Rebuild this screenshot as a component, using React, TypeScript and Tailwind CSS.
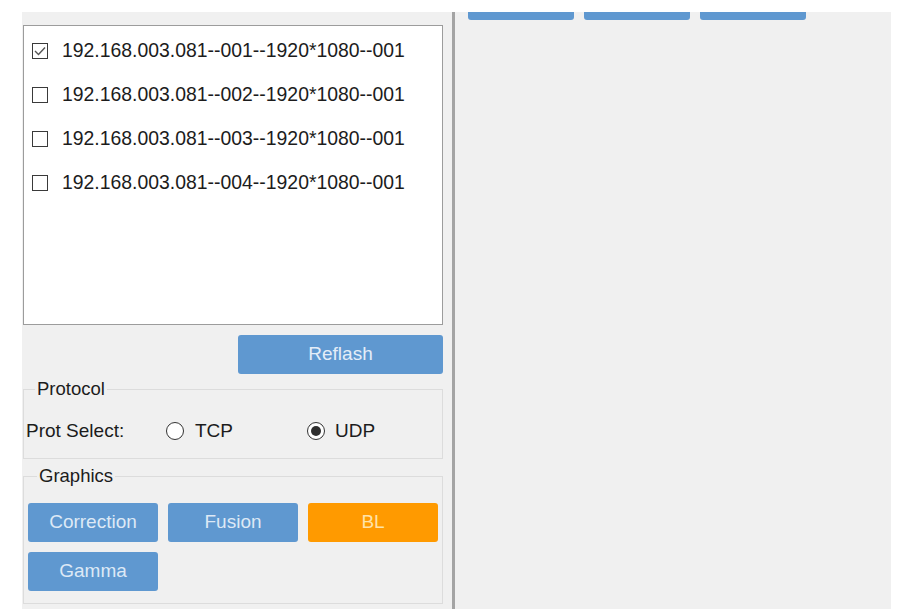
import React from "react";

const rows = [
  { id: "001", checked: true },
  { id: "002", checked: false },
  { id: "003", checked: false },
  { id: "004", checked: false },
];

function CheckBox({ checked }: { checked: boolean }) {
  return (
    <span className="w-[16px] h-[16px] border border-[#3a3a3a] bg-white flex items-center justify-center shrink-0">
      {checked && (
        <svg width="12" height="10" viewBox="0 0 12 10" fill="none">
          <path d="M1 5 L4.5 8.5 L11 1.5" stroke="#555" strokeWidth="1.4" />
        </svg>
      )}
    </span>
  );
}

function Radio({ checked }: { checked: boolean }) {
  return (
    <span className="w-[18px] h-[18px] rounded-full border border-[#333] bg-white flex items-center justify-center shrink-0">
      {checked && <span className="w-[10px] h-[10px] rounded-full bg-[#2e2e2e]" />}
    </span>
  );
}

function Btn({ label, active }: { label: string; active?: boolean }) {
  return (
    <button
      className={
        active
          ? "w-[130px] h-[39px] rounded-[3px] bg-[#ff9a00] text-[#ffe3a8] text-[19px]"
          : "w-[130px] h-[39px] rounded-[3px] bg-[#5f98d0] text-[#dde9f6] text-[19px]"
      }
    >
      {label}
    </button>
  );
}

export default function App() {
  return (
    <div className="w-[899px] h-[614px] bg-white pt-[12px] pl-[22px] font-['Liberation_Sans',Arial,sans-serif] text-[#1c1c1c]">
      <div className="w-[869px] h-[597px] bg-[#f0f0f0] flex">
        {/* left panel */}
        <div className="w-[430px] pl-[1px] pt-[13px] flex flex-col">
          <div className="w-[420px] h-[300px] bg-white border border-[#9c9c9c] pt-[3px] pl-[8px]">
            {rows.map((r) => (
              <div key={r.id} className="h-[44px] flex items-center gap-[14px] text-[19.4px]">
                <CheckBox checked={r.checked} />
                <span>192.168.003.081--{r.id}--1920*1080--001</span>
              </div>
            ))}
          </div>

          <div className="w-[420px] flex justify-end mt-[10px]">
            <button className="w-[205px] h-[39px] rounded-[3px] bg-[#5f98d0] text-[#e4edf8] text-[19px]">
              Reflash
            </button>
          </div>

          <fieldset className="w-[420px] mt-[5px] border border-[#dcdcdc] pl-[2px] pb-[15px]">
            <legend className="ml-[9px] px-[2px] text-[18.5px] leading-[20px]">Protocol</legend>
            <div className="flex items-center h-[24px] mt-[20px] text-[19px]">
              <span className="w-[140px]">Prot Select:</span>
              <label className="w-[141px] flex items-center gap-[11px]">
                <Radio checked={false} />
                <span>TCP</span>
              </label>
              <label className="flex items-center gap-[10px]">
                <Radio checked={true} />
                <span>UDP</span>
              </label>
            </div>
          </fieldset>

          <fieldset className="w-[420px] mt-[7px] border border-[#dcdcdc] pl-[4px] pb-[12px]">
            <legend className="ml-[9px] px-[2px] text-[18.5px] leading-[20px]">Graphics</legend>
            <div className="grid grid-cols-[repeat(3,130px)] gap-[10px] mt-[17px]">
              <Btn label="Correction" />
              <Btn label="Fusion" />
              <Btn label="BL" active />
              <Btn label="Gamma" />
            </div>
          </fieldset>
        </div>

        {/* divider */}
        <div className="w-[3px] bg-[#a4a4a4]" />

        {/* right panel */}
        <div className="flex-1 pl-[13px]">
          <div className="flex gap-[10px]">
            <div className="w-[106px] h-[8px] rounded-b-[3px] bg-[#5f98d0]" />
            <div className="w-[106px] h-[8px] rounded-b-[3px] bg-[#5f98d0]" />
            <div className="w-[106px] h-[8px] rounded-b-[3px] bg-[#5f98d0]" />
          </div>
        </div>
      </div>
    </div>
  );
}
